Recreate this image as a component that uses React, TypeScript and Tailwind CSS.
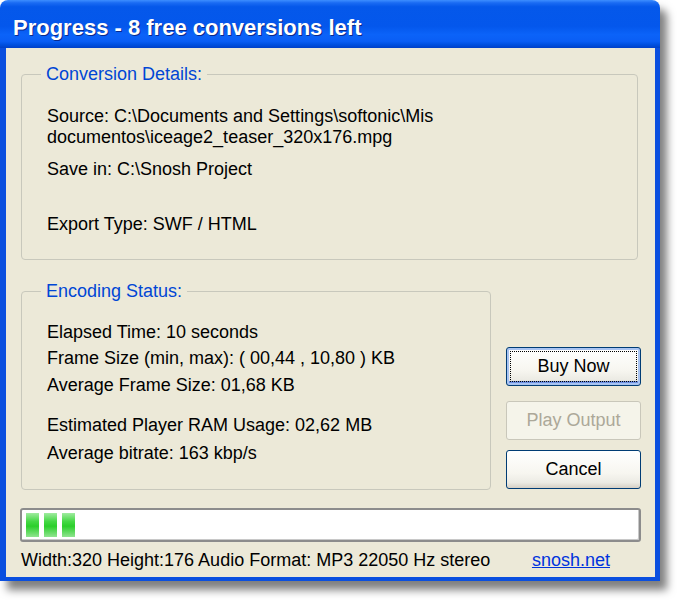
import React from 'react';

const font = { fontFamily: '"Liberation Sans", Arial, sans-serif' };

const Line = ({ children, className = '' }: { children: React.ReactNode; className?: string }) => (
  <div className={`whitespace-nowrap leading-[21px] ${className}`}>{children}</div>
);

const Group = ({
  title,
  className = '',
  children,
}: {
  title: string;
  className?: string;
  children: React.ReactNode;
}) => (
  <fieldset className={`rounded-[4px] border border-[#c8c8bc] ${className}`}>
    <legend className="ml-[19px] px-[5px] leading-[20px] text-[#0046d5]">{title}</legend>
    {children}
  </fieldset>
);

const XpButton = ({
  label,
  primary,
  disabled,
}: {
  label: string;
  primary?: boolean;
  disabled?: boolean;
}) => {
  if (disabled) {
    return (
      <button
        disabled
        className="h-[39px] w-[135px] rounded-[3px] border border-[#c9c7ba] bg-[#f5f4ea] text-[#aca899]"
      >
        {label}
      </button>
    );
  }
  return (
    <button
      className={`h-[39px] w-[135px] rounded-[3px] border border-[#003c74] bg-[linear-gradient(to_bottom,#ffffff,#f7f6f0_60%,#ecebe4_85%,#d6d0c5)] text-black ${
        primary ? 'p-[3px] shadow-[inset_0_0_0_2px_#a9c4f2,inset_0_-2px_0_2px_#6c8fe0]' : ''
      }`}
    >
      {primary ? (
        <span className="flex h-full w-full items-center justify-center border border-dotted border-black">
          {label}
        </span>
      ) : (
        label
      )}
    </button>
  );
};

export default function App() {
  return (
    <div className="h-[602px] w-[680px] bg-white text-[18px] text-black" style={font}>
      <div className="flex h-[581px] w-[660px] flex-col rounded-t-[8px] shadow-[7px_9px_8px_rgba(0,0,0,0.5)]">
        {/* title bar */}
        <div className="h-[48px] shrink-0 rounded-t-[8px] bg-[linear-gradient(to_bottom,#3d8eff_0%,#1a6bf3_6%,#0558ea_14%,#0457ec_55%,#0b63f9_72%,#0a5ef5_86%,#0050e0_93%,#0040c8_100%)] pl-[13px] pt-[16px]">
          <span className="text-[22px] font-bold leading-[22px] text-white [text-shadow:1px_1px_0_#0a2a8c]">
            Progress - 8 free conversions left
          </span>
        </div>

        {/* body */}
        <div className="flex flex-1 flex-col border-b-[4px] border-l-[6px] border-r-[5px] border-[#0a4fdf] bg-[#ece9d8] pl-[15px] pr-[14px]">
          <Group title="Conversion Details:" className="mr-[3px] mt-[16px] h-[196px]">
            <div className="pl-[25px] pt-[22px]">
              <Line>Source: C:\Documents and Settings\softonic\Mis</Line>
              <Line>documentos\iceage2_teaser_320x176.mpg</Line>
              <Line className="mt-[11px]">Save in: C:\Snosh Project</Line>
              <Line className="mt-[34px]">Export Type: SWF / HTML</Line>
            </div>
          </Group>

          <div className="mt-[21px] flex items-end">
            <Group title="Encoding Status:" className="h-[209px] w-[470px]">
              <div className="pl-[25px] pt-[21px]">
                <Line>Elapsed Time: 10 seconds</Line>
                <Line className="mt-[5px]">Frame Size (min, max): ( 00,44 , 10,80 ) KB</Line>
                <Line className="mt-[6px]">Average Frame Size: 01,68 KB</Line>
                <Line className="mt-[19px]">Estimated Player RAM Usage: 02,62 MB</Line>
                <Line className="mt-[7px]">Average bitrate: 163 kbp/s</Line>
              </div>
            </Group>
            <div className="mb-[1px] ml-[15px] flex flex-col">
              <XpButton label="Buy Now" primary />
              <div className="mt-[15px]">
                <XpButton label="Play Output" disabled />
              </div>
              <div className="mt-[10px]">
                <XpButton label="Cancel" />
              </div>
            </div>
          </div>

          {/* progress */}
          <div className="ml-[-1px] mt-[18px] flex h-[34px] gap-[5px] rounded-[3px] border-2 border-[#8c8c8c] bg-white pl-[4px] pt-[3px] shadow-[inset_-1px_-1px_0_#c8c8c8]">
            {[0, 1, 2].map((i) => (
              <div
                key={i}
                className="h-[24px] w-[13px] bg-[linear-gradient(to_bottom,#a0eba0,#45d845_35%,#2bcf2b_55%,#90e490)]"
              />
            ))}
          </div>

          <div className="mt-[8px] flex justify-between pr-[31px] leading-[20px]">
            <span className="whitespace-nowrap">Width:320 Height:176 Audio Format: MP3 22050 Hz stereo</span>
            <a className="text-[#0033dd] underline">snosh.net</a>
          </div>
        </div>
      </div>
    </div>
  );
}
